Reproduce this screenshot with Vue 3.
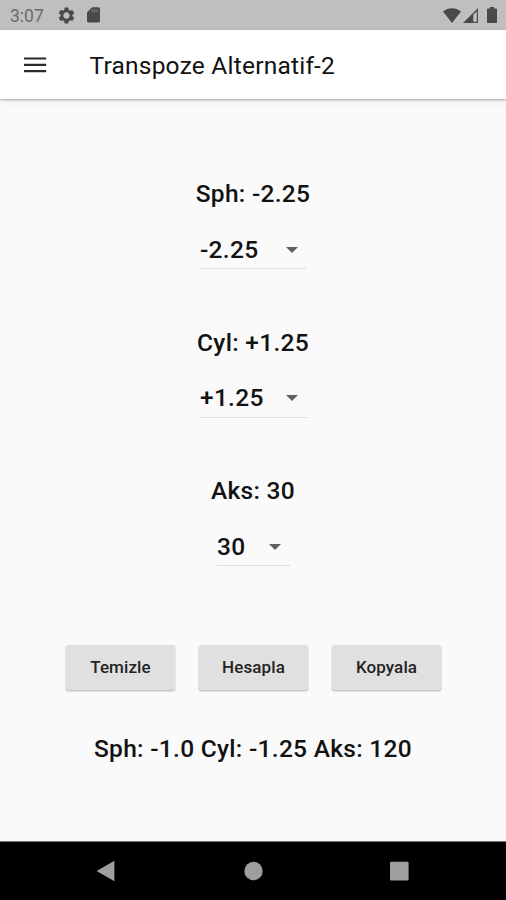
<script setup>
import { ref } from 'vue'

const fields = ref([
  { key: 'sph', label: 'Sph', value: '-2.25' },
  { key: 'cyl', label: 'Cyl', value: '+1.25' },
  { key: 'aks', label: 'Aks', value: '30' },
])
const actions = ['Temizle', 'Hesapla', 'Kopyala']
const result = ref('Sph: -1.0 Cyl: -1.25 Aks: 120')
</script>

<template>
  <div class="screen">
    <div class="status">
      <span class="clock">3:07</span>
      <svg class="gear" viewBox="0 0 24 24"><path d="M19.43 12.98c.04-.32.07-.64.07-.98s-.03-.66-.07-.98l2.11-1.65c.19-.15.24-.42.12-.64l-2-3.46c-.12-.22-.39-.3-.61-.22l-2.49 1c-.52-.4-1.08-.73-1.69-.98l-.38-2.65C14.46 2.18 14.25 2 14 2h-4c-.25 0-.46.18-.49.42l-.38 2.65c-.61.25-1.17.59-1.69.98l-2.49-1c-.23-.09-.49 0-.61.22l-2 3.46c-.13.22-.07.49.12.64l2.11 1.65c-.04.32-.07.65-.07.98s.03.66.07.98l-2.11 1.65c-.19.15-.24.42-.12.64l2 3.46c.12.22.39.3.61.22l2.49-1c.52.4 1.08.73 1.69.98l.38 2.65c.03.24.24.42.49.42h4c.25 0 .46-.18.49-.42l.38-2.65c.61-.25 1.17-.59 1.69-.98l2.49 1c.23.09.49 0 .61-.22l2-3.46c.12-.22.07-.49-.12-.64l-2.11-1.65zM12 16c-2.200 0-4-1.800-4-4s1.800-4 4-4 4 1.800 4 4-1.800 4-4 4z" /></svg>
      <svg class="sd" viewBox="0 0 13 16"><path d="M5 0.3H11.5Q13 .3 13 1.8V14Q13 15.500 11.500 15.500H1.500Q0 15.500 0 14V5.300Z" /><path class="slots" d="M5.200 2.300V5M7.700 2.300V5M10.200 2.300V5" /></svg>
      <span class="spacer"></span>
      <svg class="wifi" viewBox="0 0 18 15"><path d="M0 3.600Q3.800.2 9 .2T18 3.600L9 15Z" /></svg>
      <svg class="signal" viewBox="0 0 15 15"><path fill-rule="evenodd" d="M15 0V15H0ZM13.800 3.200L10.300 6.700V13.800H13.800Z" /></svg>
      <svg class="battery" viewBox="0 0 10 16"><path d="M3 0H7V1.600H9Q10 1.600 10 2.600V15Q10 16 9 16H1Q0 16 0 15V2.600Q0 1.600 1 1.600H3Z" /></svg>
    </div>

    <header class="appbar">
      <button class="menu" aria-label="Menu">
        <svg viewBox="0 0 23 16"><path d="M0 1.500H22.200M0 7.900H22.200M0 14.100H22.200" /></svg>
      </button>
      <h1>Transpoze Alternatif-2</h1>
    </header>

    <main class="content">
      <section v-for="field in fields" :key="field.key" class="field">
        <p class="label">{{ field.label }}: {{ field.value }}</p>
        <div class="select" :class="field.key">
          <span>{{ field.value }}</span>
          <svg viewBox="0 0 12 6"><path d="M0 0H12L6 6Z" /></svg>
        </div>
      </section>
      <div class="actions">
        <button v-for="action in actions" :key="action">{{ action }}</button>
      </div>
      <p class="result">{{ result }}</p>
    </main>

    <nav class="navbar">
      <svg viewBox="0 0 20 22"><path d="M.6 11L18.400 .8V21.200Z" /></svg>
      <svg viewBox="0 0 20 22"><circle cx="10.500" cy="11" r="9.200" /></svg>
      <svg viewBox="0 0 20 22"><rect x="0" y="1.800" width="18.600" height="18.600" rx="1" /></svg>
    </nav>
  </div>
</template>

<style>
body {
  background: #fafafa;
}
</style>

<style scoped>
.screen {
  display: flex;
  flex-direction: column;
  width: 506px;
  height: 900px;
  overflow: hidden;
  background: #fafafa;
  color: #121212;
  font-family: Roboto, "Liberation Sans", sans-serif;
}
.screen * {
  box-sizing: border-box;
}
svg {
  display: block;
  flex: none;
}
h1,
p {
  margin: 0;
  white-space: nowrap;
}
button {
  border: 0;
  padding: 0;
  font-family: inherit;
  color: inherit;
}
.status {
  display: flex;
  flex: none;
  height: 30px;
  padding: 0 9px 0 10px;
  align-items: center;
  background: #bfbfbf;
  fill: #4a4a4a;
}
.clock {
  width: 46.5px;
  padding-top: 1px;
  font-size: 17.5px;
  line-height: 20px;
  color: #6a6a6a;
}
.gear {
  width: 19px;
  height: 19px;
}
.sd {
  width: 13px;
  height: 16px;
  margin-left: 11.5px;
}
.slots {
  stroke: #8a8a8a;
  stroke-width: 1;
}
.spacer {
  flex: 1;
}
.wifi {
  width: 18px;
  height: 15px;
}
.signal {
  width: 15px;
  height: 15px;
  margin-left: 2px;
}
.battery {
  width: 10px;
  height: 16px;
  margin-left: 9px;
}
.appbar {
  display: flex;
  flex: none;
  height: 69px;
  align-items: center;
  padding-left: 24px;
  background: #fff;
  box-shadow: 0 1px 2px rgba(0, 0, 0, 0.3), 0 3px 7px rgba(0, 0, 0, 0.06);
}
.menu {
  margin-right: 42.5px;
  background: none;
}
.menu svg {
  width: 23px;
  height: 16px;
  fill: none;
  stroke: #2c2c2c;
  stroke-width: 2.1;
}
h1 {
  font-size: 24.5px;
  line-height: 30px;
  font-weight: 400;
  letter-spacing: 0.22px;
  padding-top: 2px;
}
.content {
  display: flex;
  flex: 1;
  flex-direction: column;
  align-items: center;
  padding-top: 80px;
}
.field {
  display: flex;
  flex-direction: column;
  align-items: center;
  height: 148.7px;
}
.label,
.select,
.result {
  font-size: 24.5px;
  line-height: 30px;
  font-weight: 500;
  letter-spacing: 0.29px;
}
.select {
  display: flex;
  justify-content: space-between;
  align-items: center;
  width: 107px;
  height: 43px;
  margin-top: 17px;
  padding: 5px 8.5px 0 0.5px;
  border-bottom: 1px solid #dedede;
}
.select.aks {
  width: 73px;
}
.select svg {
  width: 12px;
  height: 6px;
  fill: #606060;
}
.actions {
  display: flex;
  gap: 24px;
  margin-top: 19.9px;
  padding-left: 1px;
}
.actions button {
  width: 109px;
  height: 45px;
  padding-bottom: 1px;
  border-radius: 2.5px;
  background: #e0e0e0;
  color: #242424;
  font-size: 17px;
  line-height: 20px;
  font-weight: 500;
  letter-spacing: 0.1px;
  box-shadow: 0 1px 2px rgba(0, 0, 0, 0.3);
}
.result {
  margin-top: 44px;
}
.navbar {
  display: flex;
  flex: none;
  height: 59px;
  align-items: center;
  justify-content: center;
  gap: 127px;
  border-top: 1px solid #777;
  background: #000;
  fill: #9e9e9e;
}
.navbar svg {
  width: 20px;
  height: 22px;
}
</style>
